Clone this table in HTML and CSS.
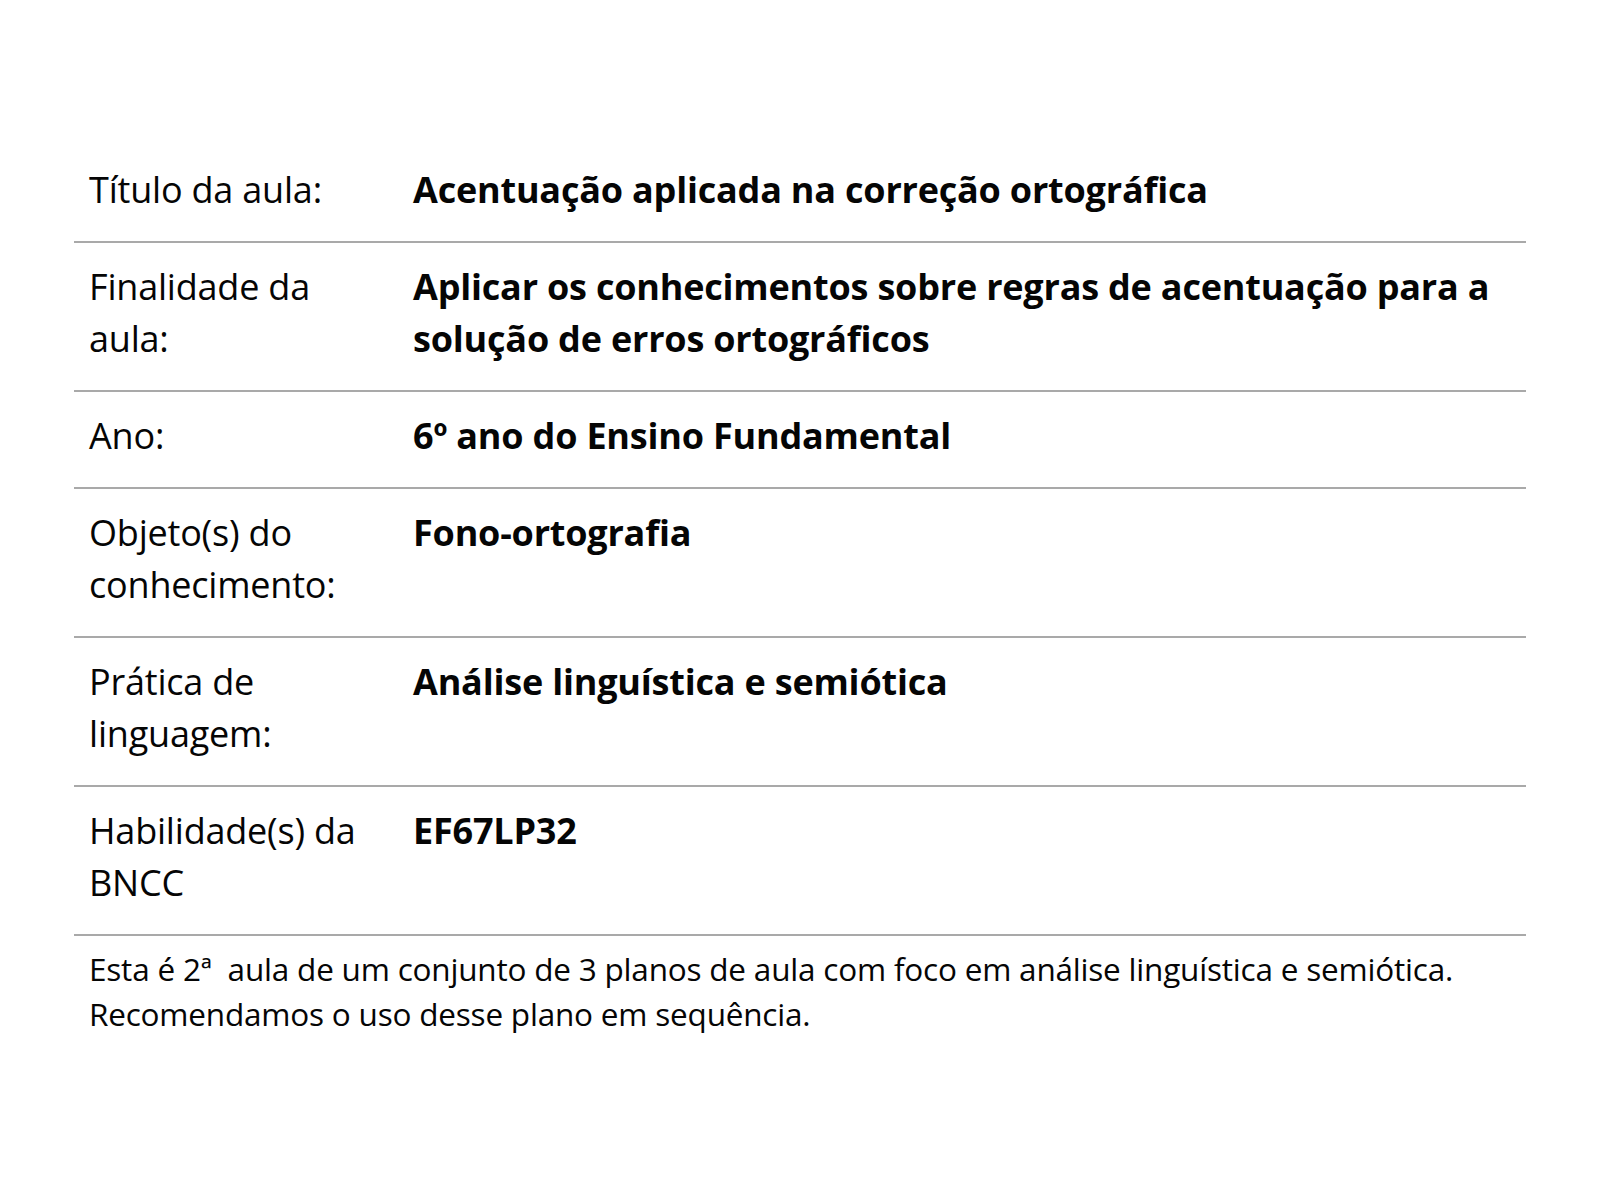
FILE: index.html
```html
<!DOCTYPE html>
<html lang="pt">
<head>
<meta charset="utf-8">
<link rel="stylesheet" href="styles.css">
</head>
<body>
<main class="page">
  <div class="plan">
    <div class="row">
      <div class="label">Título da aula:</div>
      <div class="value">Acentuação aplicada na correção ortográfica</div>
    </div>
    <div class="row">
      <div class="label">Finalidade da aula:</div>
      <div class="value">Aplicar os conhecimentos sobre regras de acentuação para a solução de erros ortográficos</div>
    </div>
    <div class="row">
      <div class="label">Ano:</div>
      <div class="value">6º ano do Ensino Fundamental</div>
    </div>
    <div class="row">
      <div class="label">Objeto(s) do conhecimento:</div>
      <div class="value">Fono-ortografia</div>
    </div>
    <div class="row">
      <div class="label">Prática de linguagem:</div>
      <div class="value">Análise linguística e semiótica</div>
    </div>
    <div class="row">
      <div class="label">Habilidade(s) da BNCC</div>
      <div class="value">EF67LP32</div>
    </div>
  </div>
  <p class="note">Esta é 2ª&nbsp; aula de um conjunto de 3 planos de aula com foco em análise linguística e semiótica. Recomendamos o uso desse plano em sequência.</p>
</main>
</body>
</html>
```

FILE: styles.css
```css
html, body {
  margin: 0;
  padding: 0;
  background: #ffffff;
}

body {
  font-family: "Open Sans", "Liberation Sans", sans-serif;
  color: #050505;
  letter-spacing: -0.2px;
}

.page {
  width: 1452px;
  margin-left: 74px;
  padding-top: 146px;
}

.plan {
  display: flex;
  flex-direction: column;
}

.row {
  display: grid;
  grid-template-columns: 323px 1fr;
  border-bottom: 2px solid #a9a9a9;
  padding: 18px 0 25px;
  font-size: 36px;
  line-height: 52px;
}

.label {
  padding: 0 16px 0 15px;
  font-weight: 400;
}

.value {
  padding: 0 16px;
  font-weight: 700;
}

.note {
  margin: 10px 0 0;
  padding: 0 16px 0 15px;
  font-size: 31.5px;
  line-height: 45px;
}
```
